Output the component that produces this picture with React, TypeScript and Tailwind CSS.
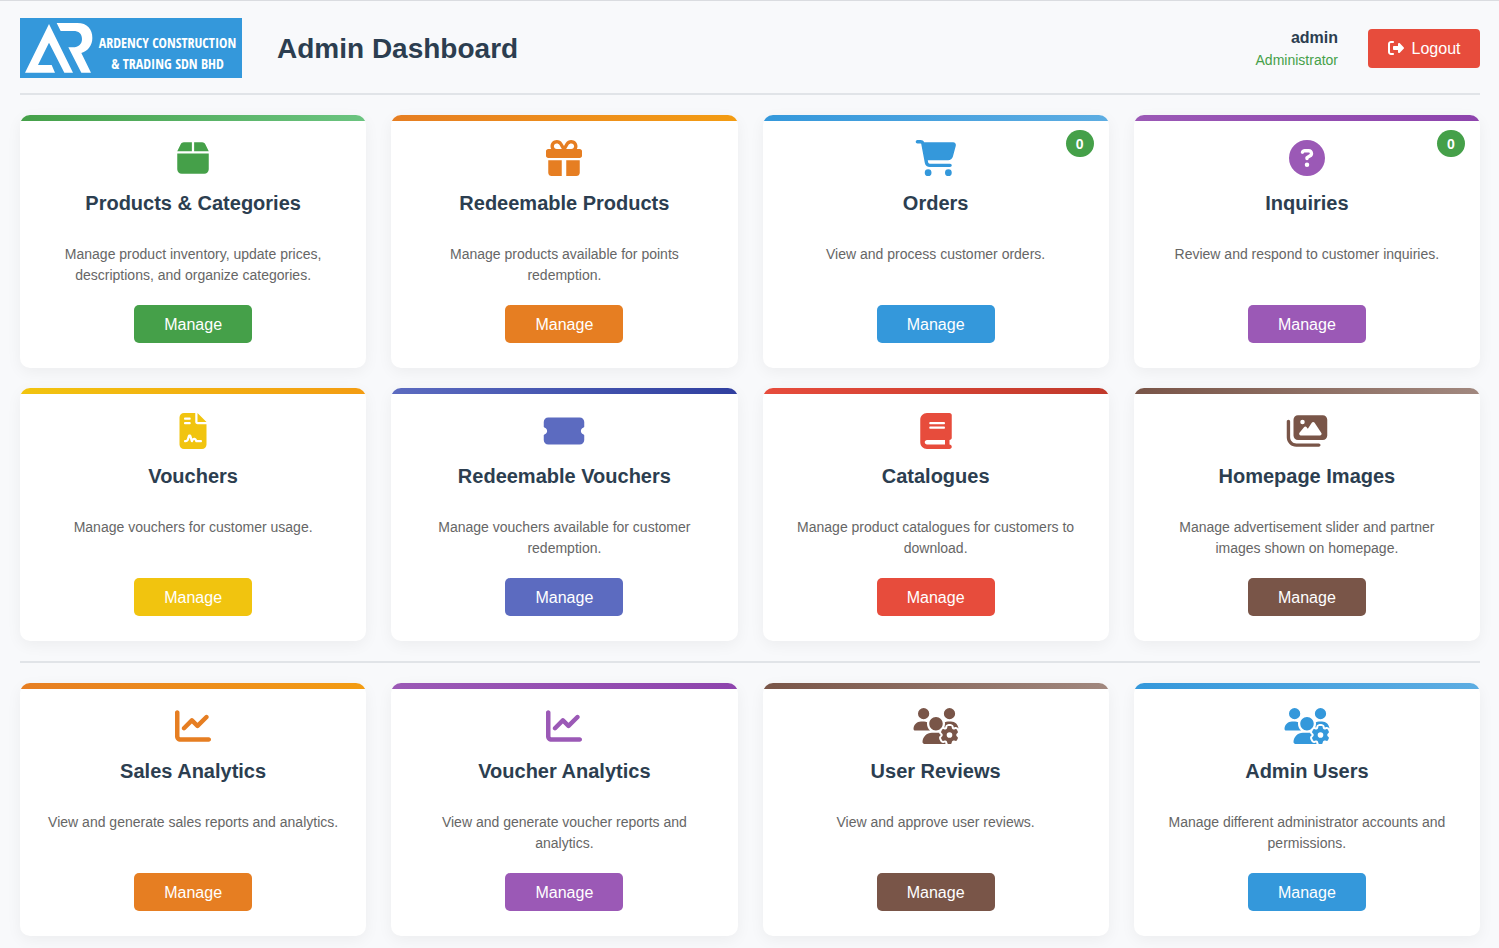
import type { IconType } from "react-icons";
import {
  FaBook,
  FaBox,
  FaCartShopping,
  FaChartLine,
  FaCircleQuestion,
  FaFileContract,
  FaGift,
  FaImages,
  FaRightFromBracket,
  FaTicketSimple,
  FaUsersGear,
} from "react-icons/fa6";

type Tone = { text: string; button: string; bar: string };

const tones = {
  green: { text: "text-[#45a049]", button: "bg-[#45a049]", bar: "from-[#45a049] to-[#6bc480]" },
  orange: { text: "text-[#e67e22]", button: "bg-[#e67e22]", bar: "from-[#e67e22] to-[#f39c12]" },
  blue: { text: "text-[#3498db]", button: "bg-[#3498db]", bar: "from-[#3498db] to-[#5dade2]" },
  purple: { text: "text-[#9b59b6]", button: "bg-[#9b59b6]", bar: "from-[#9b59b6] to-[#8e44ad]" },
  yellow: { text: "text-[#f1c40f]", button: "bg-[#f1c40f]", bar: "from-[#f1c40f] to-[#f39c12]" },
  indigo: { text: "text-[#5c6bc0]", button: "bg-[#5c6bc0]", bar: "from-[#5c6bc0] to-[#303f9f]" },
  red: { text: "text-[#e74c3c]", button: "bg-[#e74c3c]", bar: "from-[#e74c3c] to-[#c0392b]" },
  brown: { text: "text-[#795548]", button: "bg-[#795548]", bar: "from-[#795548] to-[#a1887f]" },
} satisfies Record<string, Tone>;

type CardData = {
  title: string;
  description: string;
  icon: IconType;
  tone: Tone;
  count?: number;
};

const storeCards: CardData[] = [
  {
    title: "Products & Categories",
    description: "Manage product inventory, update prices, descriptions, and organize categories.",
    icon: FaBox,
    tone: tones.green,
  },
  {
    title: "Redeemable Products",
    description: "Manage products available for points redemption.",
    icon: FaGift,
    tone: tones.orange,
  },
  {
    title: "Orders",
    description: "View and process customer orders.",
    icon: FaCartShopping,
    tone: tones.blue,
    count: 0,
  },
  {
    title: "Inquiries",
    description: "Review and respond to customer inquiries.",
    icon: FaCircleQuestion,
    tone: tones.purple,
    count: 0,
  },
  {
    title: "Vouchers",
    description: "Manage vouchers for customer usage.",
    icon: FaFileContract,
    tone: tones.yellow,
  },
  {
    title: "Redeemable Vouchers",
    description: "Manage vouchers available for customer redemption.",
    icon: FaTicketSimple,
    tone: tones.indigo,
  },
  {
    title: "Catalogues",
    description: "Manage product catalogues for customers to download.",
    icon: FaBook,
    tone: tones.red,
  },
  {
    title: "Homepage Images",
    description: "Manage advertisement slider and partner images shown on homepage.",
    icon: FaImages,
    tone: tones.brown,
  },
];

const adminCards: CardData[] = [
  {
    title: "Sales Analytics",
    description: "View and generate sales reports and analytics.",
    icon: FaChartLine,
    tone: tones.orange,
  },
  {
    title: "Voucher Analytics",
    description: "View and generate voucher reports and analytics.",
    icon: FaChartLine,
    tone: tones.purple,
  },
  {
    title: "User Reviews",
    description: "View and approve user reviews.",
    icon: FaUsersGear,
    tone: tones.brown,
  },
  {
    title: "Admin Users",
    description: "Manage different administrator accounts and permissions.",
    icon: FaUsersGear,
    tone: tones.blue,
  },
];

function Logo() {
  return (
    <div className="flex h-[60px] w-[222px] items-center bg-[#3498db] text-white">
      <svg viewBox="0 0 228 180" className="h-[60px] w-[76px] shrink-0" fill="currentColor" aria-hidden="true">
        <path d="M87 18 L15 164 H105 L95 141 H54 L87 74 L133 164 H159 Z" />
        <path d="M110 15 H172 C202 15 217 34 217 60 C217 82 205 98 184 105 L213 164 H184 L145 88 H158 C176 88 186 78 186 63 C186 47 176 39 160 39 H122 Z" />
      </svg>
      <p className="grow pt-2.5 pr-[3px] text-center font-['Noto_Sans_ExtraCondensed','Noto_Sans_Condensed','Open_Sans_Condensed','Liberation_Sans_Narrow',sans-serif] text-sm leading-[21px] font-medium whitespace-nowrap">
        ARDENCY CONSTRUCTION
        <br />
        &amp; TRADING SDN BHD
      </p>
    </div>
  );
}

function Card({ title, description, icon: Icon, tone, count }: CardData) {
  return (
    <article className="relative flex flex-col items-center overflow-hidden rounded-[10px] bg-white pb-[25px] text-center shadow-[0_4px_15px_rgba(0,0,0,0.05)]">
      <div className={`h-1.5 w-full bg-linear-to-r ${tone.bar}`} />
      {count !== undefined && (
        <span className="absolute top-[15px] right-[15px] flex h-[27px] min-w-7 items-center justify-center rounded-full bg-[#45a049] px-2 text-sm font-bold text-white">
          {count}
        </span>
      )}
      <Icon className={`mt-[19px] h-9 w-12 ${tone.text}`} aria-hidden="true" />
      <h2 className="mt-[15px] text-xl leading-6 font-bold text-[#2c3e50]">{title}</h2>
      <p className="mt-[29px] mb-[19px] grow px-[25px] text-sm leading-[21px] text-[#666]">{description}</p>
      <button
        type="button"
        className={`rounded-[5px] px-[30px] pt-[11px] pb-[9px] text-base leading-[18px] text-white ${tone.button}`}
      >
        Manage
      </button>
    </article>
  );
}

function CardGrid({ cards }: { cards: CardData[] }) {
  return (
    <section className="grid auto-rows-fr grid-cols-1 gap-x-[25px] gap-y-5 sm:grid-cols-2 lg:grid-cols-4">
      {cards.map((card) => (
        <Card key={card.title} {...card} />
      ))}
    </section>
  );
}

export default function App() {
  return (
    <div className="min-h-screen border-t border-[#dadce0] bg-[#f8f9fb] pt-[17px] pr-[19px] pb-3 pl-5 font-['Liberation_Sans',Arial,sans-serif]">
      <header className="mb-5 flex items-center justify-between border-b-2 border-[#e1e4e8] pb-[15px]">
        <div className="flex items-center gap-[35px]">
          <Logo />
          <h1 className="pt-0.5 text-[28px] leading-8 font-bold text-[#2c3e50]">Admin Dashboard</h1>
        </div>
        <div className="flex items-center gap-[30px]">
          <div className="text-right">
            <p className="text-base leading-6 font-bold text-[#2c3e50]">admin</p>
            <p className="text-sm leading-[21px] text-[#45a049]">Administrator</p>
          </div>
          <button
            type="button"
            className="flex w-28 items-center justify-center gap-2 rounded bg-[#e74c3c] pt-[11px] pb-2.5 text-base leading-[18px] text-white"
          >
            <FaRightFromBracket className="-mt-0.5 size-4" aria-hidden="true" />
            Logout
          </button>
        </div>
      </header>
      <main>
        <CardGrid cards={storeCards} />
        <hr className="my-5 border-t-2 border-[#e1e4e8]" />
        <CardGrid cards={adminCards} />
      </main>
    </div>
  );
}
